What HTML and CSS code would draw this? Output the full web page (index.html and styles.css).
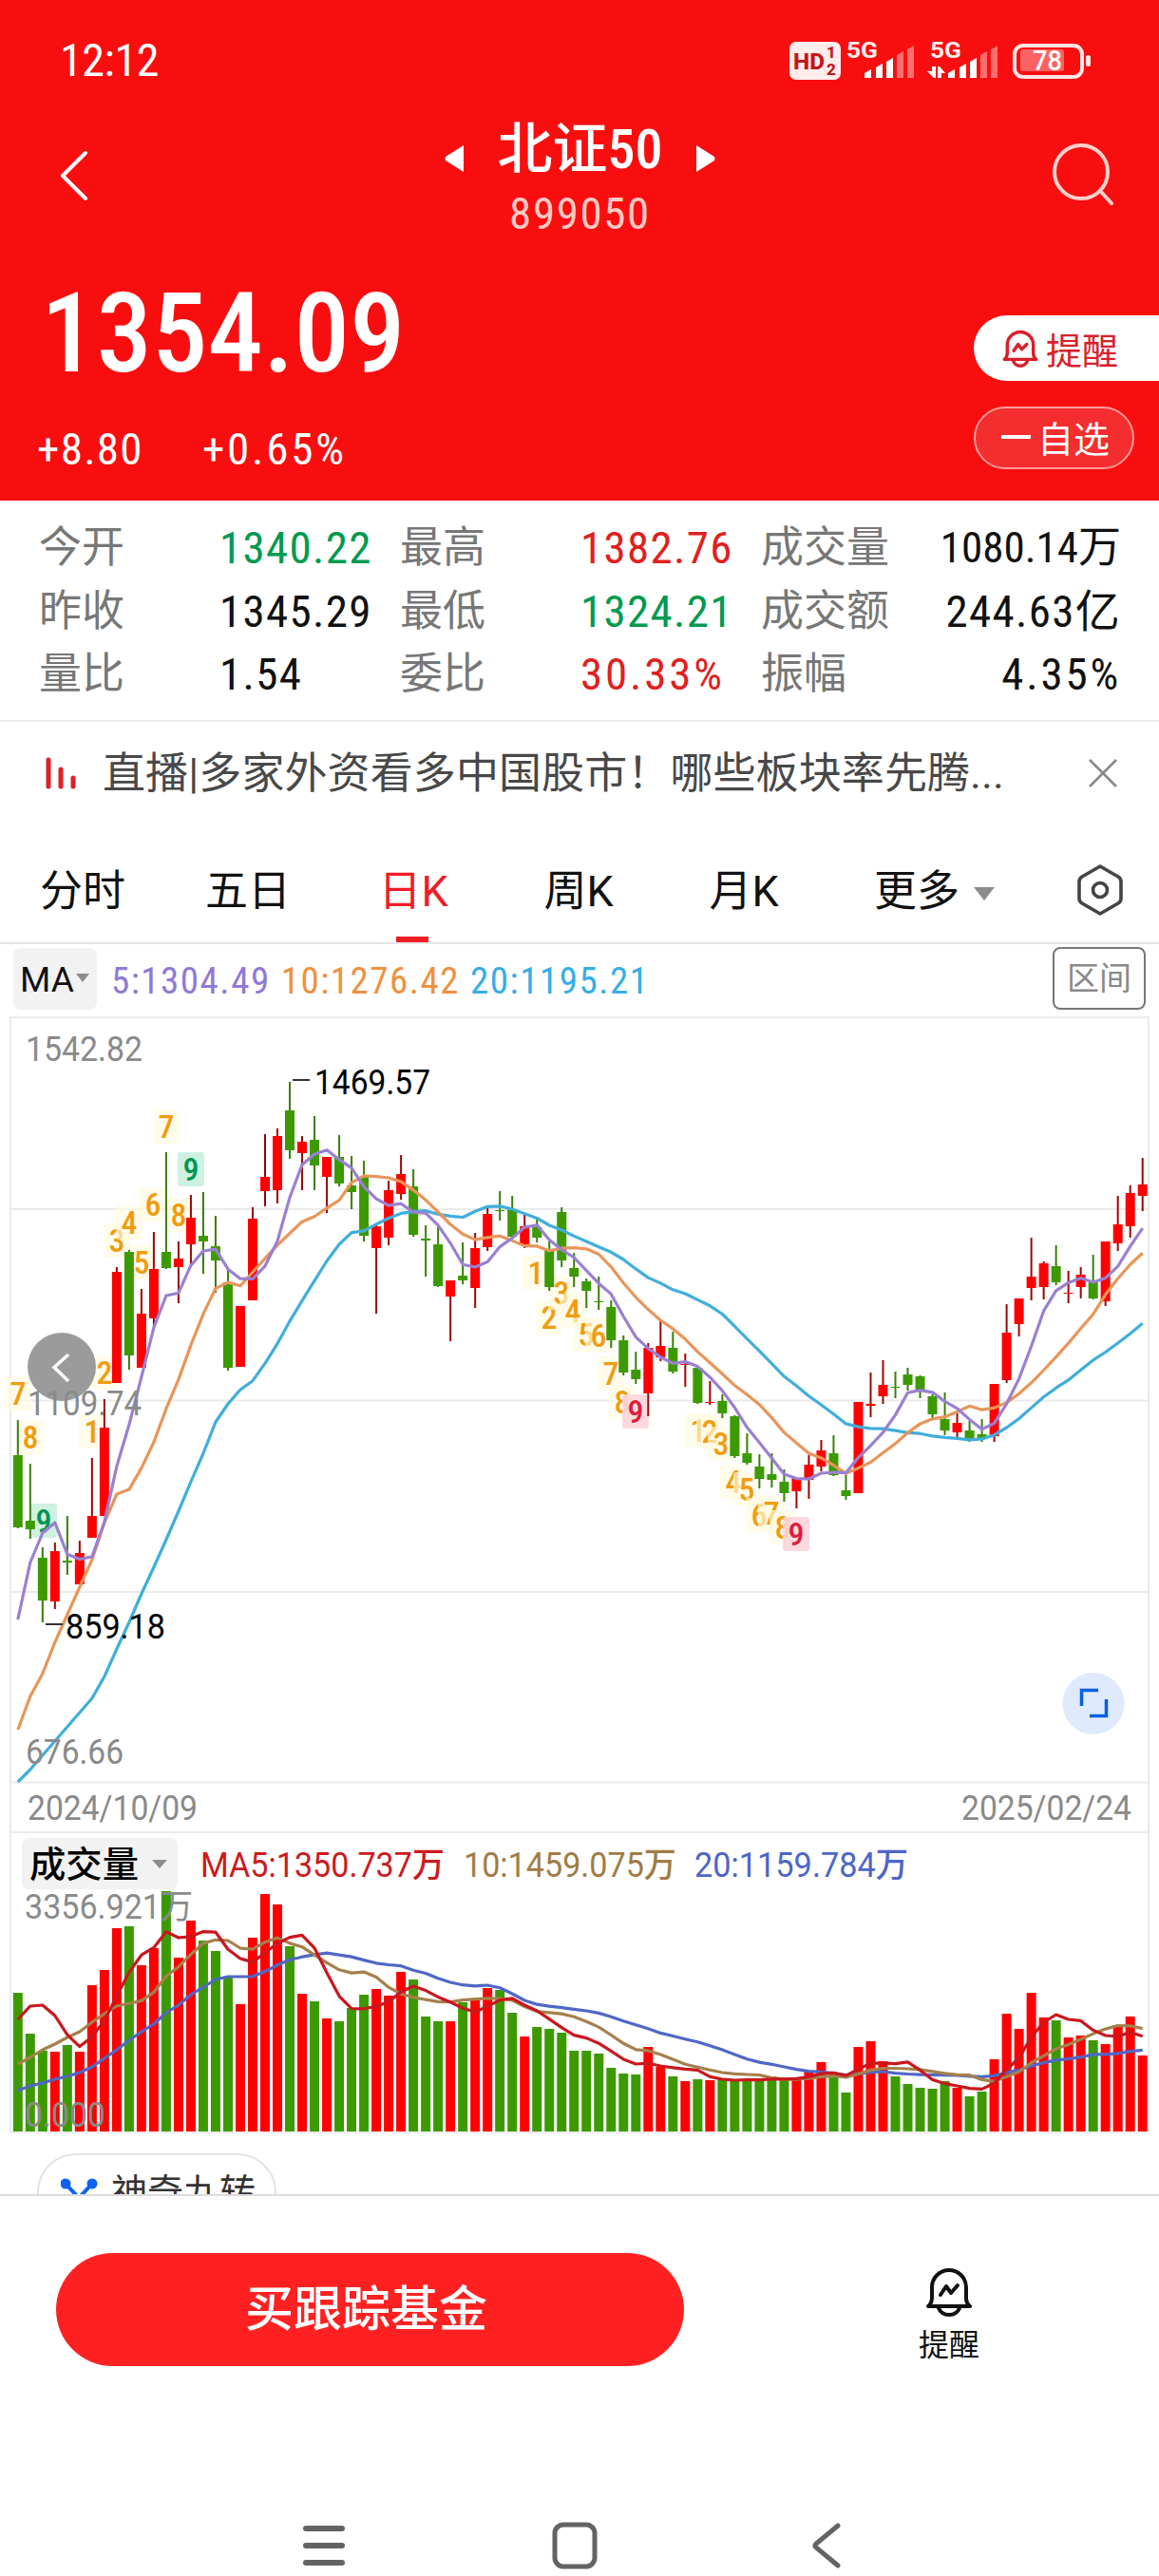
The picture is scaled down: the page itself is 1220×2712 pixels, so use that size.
FILE: index.html
```html
<!DOCTYPE html>
<html lang="zh-CN">
<head>
  <meta charset="utf-8">
  <title>北证50</title>
  <link rel="stylesheet" href="styles.css">
</head>
<body>
  <div class="header">
    <div class="status">
      <span class="clock">12:12</span>
      <svg class="status-icons" width="325" height="44" viewBox="828 40 325 44">
        <rect x="831" y="44" width="54" height="40" rx="7" fill="#ffeceb"/>
        <g class="hd">
          <text x="835" y="73" font-size="24" textLength="33" lengthAdjust="spacingAndGlyphs">HD</text>
          <text x="870" y="61" font-size="17">1</text>
          <text x="870" y="79" font-size="17">2</text>
        </g>
        <g class="net">
          <text x="891" y="61" font-size="24" textLength="33" lengthAdjust="spacingAndGlyphs">5G</text>
          <text x="979" y="61" font-size="24" textLength="33" lengthAdjust="spacingAndGlyphs">5G</text>
        </g>
        <g fill="#fff">
          <path d="M910 82v-5l7-4v9zM922 82v-11l7-4v15zM933 82v-17l7-4v21z"/>
          <path d="M998 82v-5l7-4v9zM1010 82v-11l7-4v15zM1021 82v-17l7-4v21z"/>
          <path d="M981 70h4v12h-2l-7-7h5zM987 70h2l6 7h-4v5h-4z"/>
        </g>
        <g fill="#fff" opacity=".4">
          <path d="M944 82v-24l7-4v28zM955 82v-30l7-4v34z"/>
          <path d="M1032 82v-24l7-4v28zM1043 82v-30l7-4v34z"/>
        </g>
        <rect x="1068" y="48" width="71" height="33" rx="9" fill="none" stroke="#ffe6e4" stroke-width="4"/>
        <rect x="1074" y="52" width="46" height="23" rx="3" fill="#fff" opacity=".35"/>
        <rect x="1143" y="58" width="5" height="12" rx="2.5" fill="#ffe6e4"/>
        <text class="battery" x="1087" y="74" font-size="29" textLength="31" lengthAdjust="spacingAndGlyphs">78</text>
      </svg>
    </div>
    <div class="titlebar">
      <svg class="back" width="32" height="54" viewBox="0 0 32 54"><path d="M28 3L4 27l24 24" fill="none" stroke="#fff" stroke-width="4" stroke-linecap="round" stroke-linejoin="round"/></svg>
      <div class="title">
        <div class="name">
          <svg width="22" height="30" viewBox="0 0 22 30"><path d="M20 1v28L1 17q-1-2 0-4z" fill="#fff"/></svg>
          <span class="name-text">北证50</span>
          <svg width="22" height="30" viewBox="0 0 22 30"><path d="M2 1v28l19-12q1-2 0-4z" fill="#fff"/></svg>
        </div>
        <div class="code">899050</div>
      </div>
      <svg class="search" width="70" height="70" viewBox="0 0 70 70"><g fill="none" stroke="#ffd0cc" stroke-width="4" stroke-linecap="round"><circle cx="34" cy="33" r="28"/><path d="M56 55l10 11"/></g></svg>
    </div>
    <div class="quote">
      <div>
        <div class="price">1354.09</div>
        <div class="change"><span>+8.80</span><span class="pct">+0.65%</span></div>
      </div>
      <div class="actions">
        <div class="remind">
          <svg width="38" height="40" viewBox="0 0 50 52"><g fill="none" stroke="#d8202a" stroke-width="4.5" stroke-linejoin="round" stroke-linecap="round"><path d="M3 41q4-3 4-9V21a18 18 0 0 1 36 0v11q0 6 4 9z"/><path d="M15 43q3 7 10 7t10-7"/><path d="M16 29l6-9 5 7 7-7"/></g></svg>
          <span>提醒</span>
        </div>
        <div class="watch"><i class="minus"></i><span>自选</span></div>
      </div>
    </div>
  </div>

  <div class="stats">
    <span class="k">今开</span><span class="v green">1340.22</span><span class="k">最高</span><span class="v red">1382.76</span><span class="k">成交量</span><span class="v end small">1080.14万</span>
    <span class="k">昨收</span><span class="v">1345.29</span><span class="k">最低</span><span class="v green">1324.21</span><span class="k">成交额</span><span class="v end">244.63亿</span>
    <span class="k">量比</span><span class="v">1.54</span><span class="k">委比</span><span class="v red pct">30.33%</span><span class="k">振幅</span><span class="v end pct">4.35%</span>
  </div>

  <div class="news">
    <svg width="34" height="34" viewBox="0 0 34 34"><g stroke="#e01f28" stroke-width="5" stroke-linecap="round"><path d="M4 3v28M17 13v18M30 22v9"/></g></svg>
    <span class="news-text">直播|多家外资看多中国股市！哪些板块率先腾...</span>
    <svg width="32" height="32" viewBox="0 0 32 32"><path d="M2 2l28 28M30 2L2 30" stroke="#888" stroke-width="2.6"/></svg>
  </div>

  <div class="tabs">
    <span>分时</span><span>五日</span><span class="active">日K</span><span>周K</span><span>月K</span><span class="more">更多<i class="caret"></i></span>
    <svg width="50" height="54" viewBox="0 0 50 54"><g fill="none" stroke="#444" stroke-width="3.6" stroke-linejoin="round"><path d="M25 2l19 11q3 2 3 5v18q0 3-3 5L25 52 6 41q-3-2-3-5V18q0-3 3-5z"/><circle cx="25" cy="27" r="7.5"/></g></svg>
  </div>

  <div class="ma">
    <span class="ma-chip">MA<i class="caret"></i></span>
    <span class="ma-val ma5">5:1304.49</span>
    <span class="ma-val ma10">10:1276.42</span>
    <span class="ma-val ma20">20:1195.21</span>
    <span class="range">区间</span>
  </div>

  <svg id="chart" class="chart" width="1220" height="1184" viewBox="0 1066 1220 1184"></svg>

  <div class="chips">
    <div class="chip">
      <svg width="42" height="40" viewBox="0 0 42 40"><g stroke="#0b62f5" stroke-width="4" fill="#0b62f5"><circle cx="5" cy="11" r="3.5"/><circle cx="33" cy="11" r="3.5"/><path d="M5 11l14 15L33 11M19 26v12" fill="none"/></g></svg>
      <span>神奇九转</span>
    </div>
  </div>

  <div class="footer">
    <div class="buy">买跟踪基金</div>
    <div class="alert">
      <svg width="50" height="52" viewBox="0 0 50 52"><g fill="none" stroke="#111" stroke-width="4" stroke-linejoin="round" stroke-linecap="round"><path d="M3 41q4-3 4-9V21a18 18 0 0 1 36 0v11q0 6 4 9z"/><path d="M14 43q3 7 11 7t11-7"/><path d="M16 29l6-9 5 7 7-8"/></g></svg>
      <span>提醒</span>
    </div>
  </div>

  <div class="nav">
    <svg width="46" height="44" viewBox="0 0 46 44"><path d="M4 4h38M4 22h38M4 40h38" stroke="#636363" stroke-width="6" stroke-linecap="round"/></svg>
    <svg width="50" height="50" viewBox="0 0 50 50"><rect x="4" y="3" width="42" height="44" rx="9" fill="none" stroke="#636363" stroke-width="5"/></svg>
    <svg class="nav-back" width="32" height="50" viewBox="0 0 32 50"><path d="M28 4L5 23q-2 2 0 4l23 19" fill="none" stroke="#636363" stroke-width="5" stroke-linecap="round"/></svg>
  </div>

  <script src="chart.js"></script>
</body>
</html>
```

FILE: styles.css
```css
body {
  margin: 0;
  width: 1220px;
  height: 2712px;
  overflow: hidden;
  background: #fff;
  color: #111;
  font-family: Roboto, "Noto Sans CJK SC", sans-serif;
  font-stretch: condensed;
}
svg {
  display: block;
}
.red {
  color: #e01f20;
}
.green {
  color: #009a4e;
}
.caret {
  display: inline-block;
  border: 11px solid transparent;
  border-top: 14px solid #8c8c8c;
  border-bottom: 0;
}

/* red header */
.header {
  height: 527px;
  background: #f90e10;
  color: #fff;
}
.status {
  display: flex;
  justify-content: space-between;
  padding: 40px 67px 0 63px;
  height: 60px;
}
.clock {
  font-size: 48px;
  line-height: 48px;
  letter-spacing: -0.4px;
}
.status-icons {
  font-stretch: normal;
}
.hd {
  fill: #c3161b;
  font-weight: 800;
}
.net {
  fill: #ffeceb;
  font-weight: 700;
}
.battery {
  fill: #fff;
  font-weight: 500;
}
.titlebar {
  display: flex;
  justify-content: space-between;
  align-items: flex-start;
  padding: 20px 46px 0 62px;
  height: 160px;
}
.back {
  margin-top: 38px;
}
.search {
  margin-top: 28px;
}
.title {
  text-align: center;
}
.name {
  display: flex;
  align-items: center;
  justify-content: center;
  gap: 33px;
  height: 74px;
  margin-left: 23px;
}
.name svg {
  margin-top: 20px;
}
.name-text {
  font-size: 58px;
  line-height: 76px;
  font-weight: 500;
}
.code {
  margin: 5px 0 0 23px;
  font-size: 47px;
  line-height: 52px;
  letter-spacing: 1.6px;
  color: #ffc9c4;
}
.quote {
  display: flex;
  justify-content: space-between;
}
.price {
  margin: 13px 0 0 43px;
  font-size: 117px;
  line-height: 116px;
  font-weight: 500;
}
.change {
  display: flex;
  gap: 62px;
  margin: 36px 0 0 39px;
  font-size: 47px;
  line-height: 56px;
  letter-spacing: 1.3px;
}
.pct {
  letter-spacing: 2.8px;
}
.actions {
  width: 195px;
  padding-top: 52px;
}
.remind {
  display: flex;
  align-items: center;
  gap: 8px;
  height: 69px;
  padding-left: 30px;
  border-radius: 35px 0 0 35px;
  background: #fff;
  color: #d8202a;
  font-size: 38px;
}
.watch {
  display: flex;
  align-items: center;
  gap: 7px;
  box-sizing: border-box;
  width: 169px;
  height: 66px;
  margin-top: 27px;
  padding: 0 0 3px 27px;
  border: 2px solid #ff9a97;
  border-radius: 33px;
  background: #f42d2e;
  font-size: 38px;
}
.minus {
  width: 31px;
  height: 4px;
  background: #fff;
}

/* key figures */
.stats {
  display: grid;
  grid-template-columns: 190px 190px 190px 190px 170px 1fr;
  grid-auto-rows: 66.5px;
  align-items: center;
  height: 214px;
  padding: 17px 40px 0 41px;
  border-bottom: 2px solid #ebebeb;
  line-height: 66px;
}
.k {
  font-size: 45px;
  color: #777;
}
.v {
  font-size: 47px;
  letter-spacing: 1.3px;
}
.v.small {
  font-size: 45px;
  letter-spacing: 0;
}
.v.pct {
  letter-spacing: 2.8px;
}
.end {
  text-align: right;
}

.news {
  display: flex;
  align-items: center;
  height: 108px;
  padding: 0 43px 0 47px;
}
.news-text {
  flex: 1;
  margin: -8px 0 0 27px;
  font-size: 45px;
  letter-spacing: 0.1px;
  color: #484848;
}

.tabs {
  display: flex;
  align-items: center;
  height: 124px;
  padding-right: 37px;
  border-bottom: 2px solid #e6e6e6;
  font-size: 45px;
  font-stretch: normal;
}
.tabs span {
  width: 174px;
  height: 124px;
  line-height: 142px;
  text-align: center;
}
.tabs svg {
  margin-top: 14px;
}
.tabs .active {
  color: #f01c26;
  background: linear-gradient(#ee1c25, #ee1c25) 69px bottom / 34px 6px no-repeat;
}
.tabs .more {
  flex: 1;
  padding-left: 50px;
  text-align: left;
}
.more .caret {
  margin: 0 0 6px 15px;
}

.ma {
  display: flex;
  align-items: center;
  height: 72px;
  padding: 0 14px;
  font-size: 39px;
}
.ma-chip {
  display: flex;
  align-items: center;
  gap: 2px;
  box-sizing: border-box;
  width: 88px;
  height: 65px;
  margin-right: 15px;
  padding: 3px 0 0 7px;
  border-radius: 8px;
  background: #f2f2f2;
  font-size: 37px;
  font-stretch: normal;
}
.ma-chip .caret {
  margin-bottom: 5px;
  border-width: 9px 7px 0;
}
.ma-val {
  margin: 5px 11px 0 0;
  letter-spacing: 1.5px;
}
.ma5 {
  color: #9079d6;
}
.ma10 {
  color: #ee9140;
}
.ma20 {
  color: #35aee6;
}
.range {
  box-sizing: border-box;
  width: 98px;
  height: 66px;
  margin-left: auto;
  border: 2px solid #777;
  border-radius: 8px;
  color: #888;
  font-size: 34px;
  line-height: 62px;
  text-align: center;
}

/* candles and volume */
.chart {
  font-weight: 450;
  font-stretch: normal;
}
.grid {
  stroke: #ebebeb;
  stroke-width: 2;
  fill: none;
}
.up {
  fill: #fe0000;
}
.down {
  fill: #3c9a00;
}
.wick-up {
  stroke: #9a0606;
  stroke-width: 2;
}
.wick-down {
  stroke: #397d08;
  stroke-width: 2;
}
.line {
  fill: none;
  stroke-width: 3.2;
  stroke-linejoin: round;
}
.axis {
  fill: #8a8a8a;
  font-weight: 400;
}
.mark {
  fill: #000;
}
.nine {
  font-size: 34px;
  font-weight: 500;
  font-stretch: condensed;
  text-anchor: middle;
}

.chips {
  height: 60px;
  padding: 17px 0 0 39px;
  box-sizing: border-box;
  overflow: hidden;
}
.chip {
  display: flex;
  align-items: center;
  gap: 11px;
  box-sizing: border-box;
  width: 252px;
  height: 82px;
  padding-left: 23px;
  border: 2px solid #e3e3e3;
  border-radius: 41px;
  color: #333;
  font-size: 38px;
}
.chip span {
  margin-top: -7px;
}

.footer {
  display: flex;
  align-items: flex-start;
  box-sizing: border-box;
  height: 300px;
  padding: 60px 0 0 59px;
  border-top: 2px solid #dcdcdc;
}
.buy {
  box-sizing: border-box;
  width: 661px;
  height: 119px;
  padding-right: 8px;
  border-radius: 60px;
  background: #ff2122;
  color: #fff;
  font-size: 51px;
  font-weight: 500;
  line-height: 119px;
  text-align: center;
}
.alert {
  display: flex;
  flex-direction: column;
  align-items: center;
  margin: 15px 0 0 247px;
  font-size: 32px;
  line-height: 36px;
}
.alert span {
  margin-top: 12px;
}
.nav {
  display: flex;
  gap: 216px;
  align-items: center;
  height: 140px;
  padding-left: 318px;
}
.nav-back {
  margin-left: 8px;
}
```

FILE: chart.js
```javascript
// top, bottom, high, low of every candle in chart units; r = rising, g = falling
var candles = [
  ['g',1532,1608,1495,1609],['g',1601,1610,1541,1620],['g',1640,1685,1629,1708],['r',1633,1686,1624,1694],
  ['g',1643,1645,1596,1658],['r',1635,1668,1622,1668],['r',1596,1619,1535,1619],['r',1503,1596,1473,1596],
  ['r',1339,1456,1334,1456],['g',1318,1427,1316,1442],['r',1383,1440,1357,1440],['r',1336,1388,1297,1400],
  ['g',1318,1335,1213,1336],['r',1325,1334,1307,1372],['r',1282,1310,1258,1333],['g',1301,1307,1255,1341],
  ['g',1312,1327,1280,1361],['g',1350,1440,1337,1443],['r',1375,1439,1375,1439],['r',1283,1369,1271,1369],
  ['r',1239,1254,1194,1270],['r',1196,1253,1188,1267],['g',1169,1211,1139,1220],['r',1202,1214,1196,1253],
  ['g',1200,1227,1175,1253],['r',1218,1239,1218,1277],['g',1218,1246,1195,1249],['g',1248,1255,1217,1273],
  ['g',1239,1301,1222,1307],['r',1291,1314,1289,1383],['r',1253,1303,1243,1311],['r',1236,1257,1216,1263],
  ['g',1249,1300,1231,1302],['g',1304,1306,1290,1344],['g',1310,1354,1290,1355],['r',1348,1365,1348,1412],
  ['g',1343,1348,1308,1352],['r',1314,1356,1298,1377],['r',1278,1313,1270,1317],['g',1274,1275,1254,1285],
  ['g',1273,1302,1259,1302],['r',1291,1310,1278,1314],['g',1292,1303,1282,1308],['g',1316,1355,1307,1359],
  ['g',1276,1327,1271,1334],['g',1335,1344,1319,1355],['g',1349,1359,1346,1377],['g',1370,1371,1344,1379],
  ['g',1376,1411,1369,1419],['g',1411,1445,1406,1448],['g',1442,1452,1423,1457],['r',1419,1467,1414,1491],
  ['r',1417,1429,1391,1433],['g',1419,1444,1402,1446],['r',1436,1437,1425,1460],['g',1440,1477,1440,1478],
  ['r',1476,1477,1454,1479],['g',1475,1488,1468,1493],['g',1491,1533,1490,1535],['g',1530,1540,1509,1542],
  ['g',1544,1557,1531,1567],['g',1552,1558,1530,1566],['g',1560,1572,1547,1581],['r',1556,1570,1556,1588],
  ['r',1542,1558,1532,1578],['r',1527,1544,1516,1549],['g',1530,1553,1511,1554],['g',1569,1575,1553,1579],
  ['r',1476,1572,1476,1572],['r',1478,1480,1445,1492],['r',1458,1470,1432,1478],['g',1460,1461,1444,1472],
  ['g',1447,1458,1440,1464],['g',1449,1463,1448,1472],['g',1470,1489,1468,1494],['g',1494,1506,1466,1511],
  ['r',1498,1508,1488,1514],['g',1506,1516,1496,1518],['g',1510,1515,1494,1518],['r',1457,1512,1457,1518],
  ['r',1403,1453,1373,1456],['r',1367,1394,1367,1407],['r',1344,1356,1303,1369],['r',1330,1355,1328,1368],
  ['g',1333,1350,1311,1353],['r',1361,1362,1338,1372],['r',1342,1355,1334,1367],['g',1349,1367,1321,1368],
  ['r',1307,1370,1307,1375],['r',1289,1309,1259,1317],['r',1256,1291,1248,1303],['r',1247,1259,1219,1275]
];

var volumes = [
  2098,2141,2159,2160,2153,2160,2090,2074,2030,2028,2069,2051,1991,2061,2022,2043,2054,2081,2110,2040,
  1994,2005,2049,2099,2107,2125,2128,2114,2100,2094,2101,2076,2084,2123,2128,2128,2108,2104,2093,2095,
  2119,2144,2134,2136,2140,2159,2159,2162,2177,2183,2184,2155,2176,2186,2191,2189,2190,2189,2191,2189,
  2189,2186,2189,2189,2180,2171,2183,2203,2155,2149,2170,2186,2194,2198,2199,2191,2198,2207,2202,2168,
  2120,2136,2098,2124,2127,2145,2143,2148,2152,2132,2123,2164
];

// the nine-turn counts: digit, centre, baseline
var turns = [
  [7,19,1479],[8,32,1525],[9,46,1613,'sell'],[1,97,1519],[2,110,1457],[3,123,1318],[4,136,1299],[5,149,1341],
  [6,161,1280],[7,175,1198],[8,188,1291],[9,201,1243,'sell'],
  [1,564,1352],[2,578,1399],[3,591,1373],[4,603,1392],[5,617,1417],[6,630,1418],[7,643,1458],[8,655,1488],[9,669,1498,'buy'],
  [1,735,1518],[2,747,1519],[3,759,1532],[4,772,1572],[5,786,1580],[6,799,1607],[7,812,1605],[8,824,1620],[9,838,1627,'buy']
];

var STEP = 13.01;
var out = [];

function cx(i) {
  return 18.8 + STEP * i;
}

function label(x, y, width, text, cls, size) {
  out.push('<text class="' + cls + '" x="' + x + '" y="' + y + '" font-size="' + (size || 36) +
    '" textLength="' + width + '" lengthAdjust="spacingAndGlyphs">' + text + '</text>');
}

// moving average; lead holds the points before the first full window
function average(values, n, lead, color) {
  var pts = values.map(function (v, i) {
    var y = lead[i];
    if (i >= lead.length) {
      y = 0;
      for (var j = i - n + 1; j <= i; j++) y += values[j] / n;
    }
    return cx(i).toFixed(1) + ',' + y.toFixed(1);
  });
  out.push('<polyline class="line" stroke="' + color + '" points="' + pts.join(' ') + '"/>');
}

out.push('<path class="grid" d="M11 2245V1071H1209V2245zM11 1273H1209M11 1474.5H1209M11 1676H1209M11 1876.5H1209M11 1929H1209"/>');

turns.forEach(function (t) {
  var fill = t[3] == 'sell' ? '#c9f0df' : t[3] == 'buy' ? '#fdd5dc' : '#fffae0';
  var color = t[3] == 'sell' ? '#009552' : t[3] == 'buy' ? '#dc1f3c' : '#f09c10';
  out.push('<rect x="' + (t[1] - 14) + '" y="' + (t[2] - 30) + '" width="28" height="36" rx="3" fill="' + fill +
    '" opacity="' + (t[3] ? .9 : .65) + '"/>');
  out.push('<text class="nine" x="' + t[1] + '" y="' + t[2] + '" fill="' + color + '">' + t[0] + '</text>');
});

candles.forEach(function (c, i) {
  var x = cx(i);
  var up = c[0] == 'r';
  out.push('<path class="' + (up ? 'wick-up' : 'wick-down') + '" d="M' + x + ' ' + c[3] + 'V' + c[4] + '"/>');
  out.push('<rect class="' + (up ? 'up' : 'down') + '" x="' + (x - 5) + '" y="' + c[1] + '" width="10" height="' + (c[2] - c[1]) + '"/>');
  out.push('<rect class="' + (up ? 'up' : 'down') + '" x="' + (x - 5) + '" y="' + volumes[i] + '" width="10" height="' + (2244 - volumes[i]) + '"/>');
});

var closes = candles.map(function (c) {
  return c[0] == 'r' ? c[1] : c[2];
});
average(closes, 20, [1876,1863,1848,1833,1818,1803,1788,1765,1736,1708,1678,1650,1621,1591,1560,1530,1497,1478,1463], '#40aedb');
average(closes, 10, [1821,1786,1762,1729,1700,1671,1642,1603,1573], '#e9955a');
average(closes, 5, [1705,1645,1614,1603], '#9a80d2');
average(volumes, 20, [2201,2196,2193,2189,2186,2182,2176,2167,2158,2148,2139,2131,2119,2111,2100,2092,2084,2081,2081], '#4f67c6');
average(volumes, 10, [2173,2166,2158,2152,2145,2139,2129,2120,2112], '#a5804c');
average(volumes, 5, [2126,2112,2111,2122], '#c9171e');

label(27, 1117, 123, '1542.82', 'axis');
label(331, 1152, 122, '1469.57', 'mark');
label(69, 1725, 105, '859.18', 'mark');
label(27, 1857, 103, '676.66', 'axis');
label(29, 1916, 179, '2024/10/09', 'axis');
label(1012, 1916, 179, '2025/02/24', 'axis');
out.push('<path d="M308 1137H326M48 1710H66" stroke="#333" stroke-width="2"/>');

// scroll-back button
out.push('<circle cx="65" cy="1439" r="36" fill="#969696" opacity=".95"/>');
out.push('<path d="M72 1426L57 1439.500L72 1454" fill="none" stroke="#fff" stroke-width="3.500"/>');
label(29, 1490, 120, '1109.74', 'axis');

// full screen button
out.push('<circle cx="1151" cy="1793.500" r="32.500" fill="#dfeafc"/>');
out.push('<path d="M1138.500 1796V1779.500H1156M1164.500 1789V1806.500H1147" fill="none" stroke="#0a5fe0" stroke-width="3.500"/>');

// volume legend
out.push('<rect x="23" y="1935" width="164" height="54" rx="7" fill="#f2f2f2"/>');
label(31, 1976, 115, '成交量', 'mark', 38);
out.push('<path d="M160 1958H176L168 1967z" fill="#8c8c8c"/>');
out.push('<g fill="#cc1a20">');
label(211, 1976, 257, 'MA5:1350.737万', '', 36);
out.push('</g><g fill="#a07c45">');
label(488, 1976, 224, '10:1459.075万', '', 36);
out.push('</g><g fill="#4c66c8">');
label(731, 1976, 225, '20:1159.784万', '', 36);
out.push('</g>');
label(26, 2020, 177, '3356.921万', 'axis');
label(26, 2239, 85, '0.000', 'axis');

document.getElementById('chart').innerHTML = out.join('');
```
